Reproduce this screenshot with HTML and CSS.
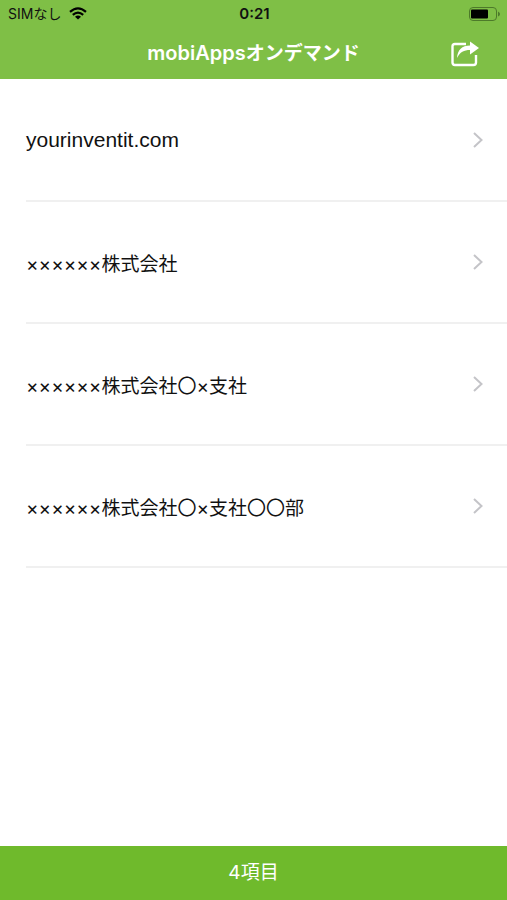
FILE: index.html
```html
<!DOCTYPE html>
<html lang="ja">
<head>
  <meta charset="UTF-8" />
  <meta name="viewport" content="width=device-width, initial-scale=1.0"/>
  <title>mobiAppsオンデマンド</title>
  <link rel="stylesheet" href="styles.css">
</head>
<body>

  <header class="site-header">
    <div class="status-bar">
      <div class="carrier">
        <span>SIMなし</span>
        <svg class="wifi" viewBox="0 0 18 13" width="18" height="13" fill="none" stroke="#000" stroke-width="2.2">
          <path d="M1 4.8Q9-2.2 17 4.8"/>
          <path d="M3.8 7.9Q9 3.4 14.2 7.9"/>
          <path d="M9 12.6L6 9.8Q9 7.4 12 9.8Z" fill="#000" stroke="none"/>
        </svg>
      </div>
      <span class="clock">0:21</span>
      <svg class="battery" viewBox="0 0 33 14" width="33" height="14">
        <rect x="1.5" y="0.5" width="27" height="13" rx="3.5" fill="none" stroke="#4d7a2a"/>
        <rect x="3" y="2.5" width="17" height="9" rx="1" fill="#000"/>
        <path d="M30 4.5q2 1 2 2.5t-2 2.5z" fill="#4d7a2a"/>
      </svg>
    </div>

    <div class="title-bar">
      <h1>mobiApps<span class="kana">オンデマンド</span></h1>
      <button type="button" class="share" aria-label="共有">
        <svg viewBox="0 0 28 26" width="28" height="26">
          <path d="M15 3H4Q1.5 3 1.5 5.5V21.5Q1.5 24 4 24H22.500Q25 24 25 21.5V14" fill="none" stroke="#fff" stroke-width="2.4"/>
          <path d="M6 17C6.500 9 11 4.500 19 4.500V0.500L28 7L19 13.500V9C13 9 9 11 6 17Z" fill="#fff"/>
        </svg>
      </button>
    </div>
  </header>

  <main class="container">
    <ul class="list">
      <li>
        <a href="#" class="domain">yourinventit.com
          <svg class="arrow" viewBox="0 0 10 16" width="10" height="16"><path d="M1 1l7.5 7L1 15"/></svg>
        </a>
      </li>
      <li>
        <a href="#">××××××株式会社
          <svg class="arrow" viewBox="0 0 10 16" width="10" height="16"><path d="M1 1l7.5 7L1 15"/></svg>
        </a>
      </li>
      <li>
        <a href="#">××××××株式会社〇×支社
          <svg class="arrow" viewBox="0 0 10 16" width="10" height="16"><path d="M1 1l7.5 7L1 15"/></svg>
        </a>
      </li>
      <li>
        <a href="#">××××××株式会社〇×支社〇〇部
          <svg class="arrow" viewBox="0 0 10 16" width="10" height="16"><path d="M1 1l7.5 7L1 15"/></svg>
        </a>
      </li>
    </ul>
  </main>

  <footer class="site-footer">4項目</footer>

</body>
</html>
```

FILE: styles.css
```css
* {
  box-sizing: border-box;
}

body {
  margin: 0;
  min-height: 100vh;
  display: flex;
  flex-direction: column;
  font-family: Inter, "Noto Sans CJK JP", sans-serif;
  background: #fff;
  color: #111;
}

.site-header {
  background-color: #7fbf46;
}

.status-bar {
  display: grid;
  grid-template-columns: 1fr auto 1fr;
  align-items: center;
  height: 27px;
  padding: 0 6px 0 8px;
  font-size: 14px;
  line-height: 27px;
  color: #111;
}

.carrier {
  display: flex;
  align-items: center;
  gap: 8px;
}

.clock {
  font-size: 15px;
  font-weight: 600;
}

.battery {
  justify-self: end;
}

/* title stays centred between two equal side columns */
.title-bar {
  display: grid;
  grid-template-columns: 1fr auto 1fr;
  align-items: center;
  height: 52px;
  padding: 0 28px;
}

.title-bar h1 {
  grid-column: 2;
  margin: 0;
  font-size: 20px;
  font-weight: 600;
  line-height: 52px;
  color: #fff;
}

.title-bar .kana {
  font-size: 19px;
}

.share {
  justify-self: end;
  padding: 0;
  border: none;
  background: none;
  cursor: pointer;
}

.share svg {
  display: block;
}

.container {
  flex: 1;
}

.list {
  margin: 0;
  padding: 1px 0 0 26px;
  list-style: none;
}

.list li {
  border-bottom: 2px solid #f0f0f0;
}

.list a {
  display: flex;
  justify-content: space-between;
  align-items: center;
  height: 120px;
  padding-right: 24px;
  font-size: 19px;
  color: #111;
  text-decoration: none;
}

.list .domain {
  font-family: "Liberation Sans", Arial, sans-serif;
  font-size: 21px;
}

.arrow {
  fill: none;
  stroke: #c4c4c8;
  stroke-width: 2;
}

.site-footer {
  height: 54px;
  background-color: #6fba2c;
  color: #fff;
  font-size: 19px;
  line-height: 54px;
  text-align: center;
}
```
